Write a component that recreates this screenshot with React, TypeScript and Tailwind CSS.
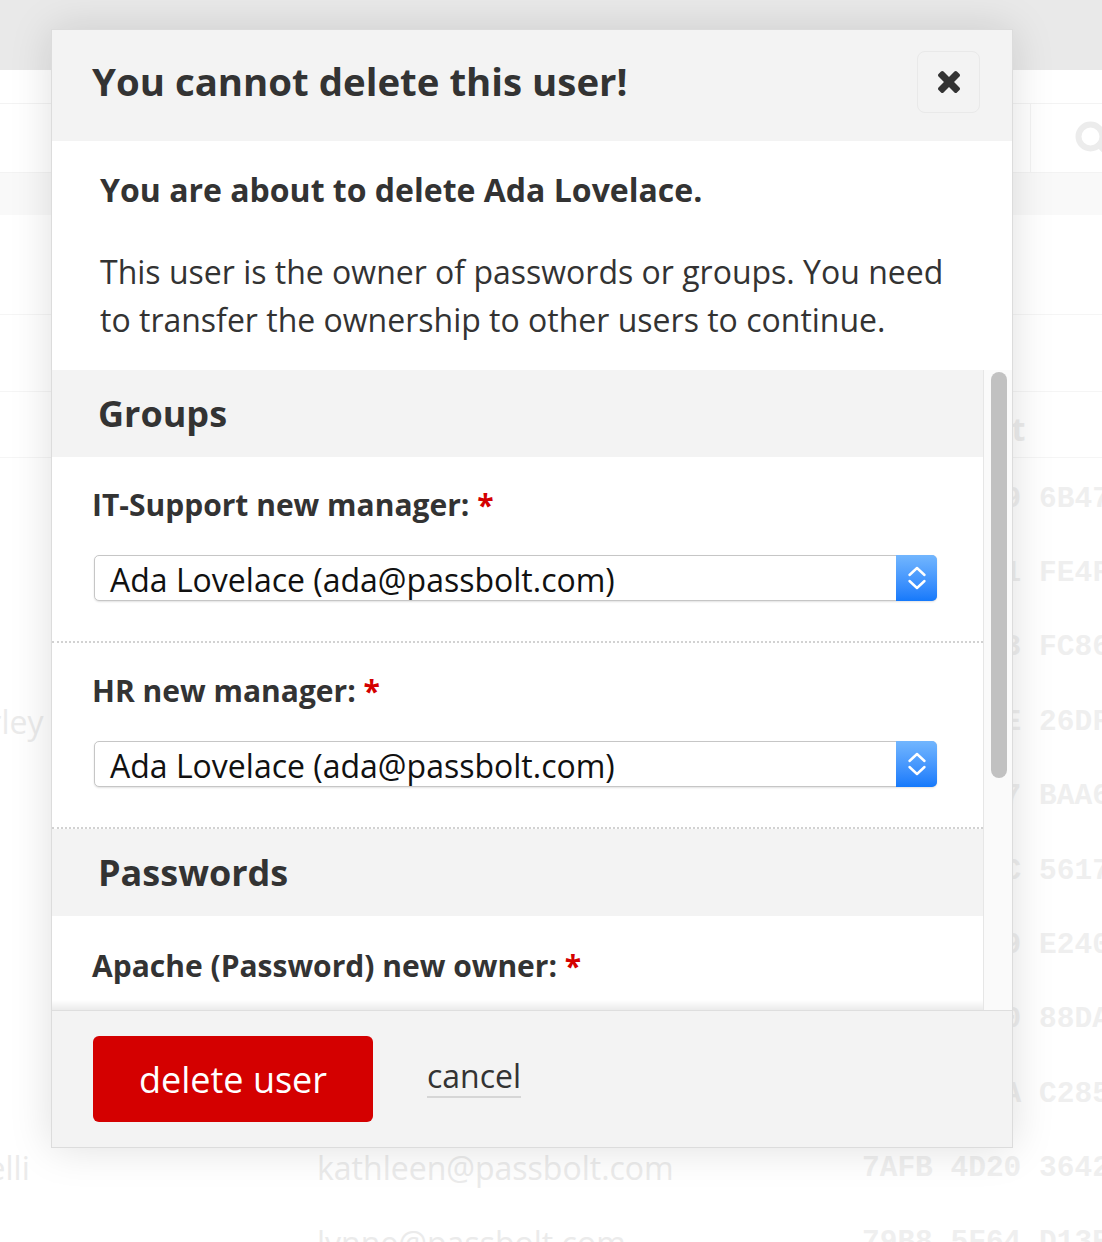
import { Search } from 'lucide-react'

// only the long names reach into the visible strip on the left
const rows = [
  { name: 'Ada Lovelace', email: 'ada@passbolt.com', fp: '03F2 60E9 6B47' },
  { name: 'Betty Holberton', email: 'betty@passbolt.com', fp: '8E5A 2D41 FE4F' },
  { name: 'Carol Shaw', email: 'carol@passbolt.com', fp: 'A74F 0D93 FC86' },
  { name: 'Dame Steve Shirley', email: 'dame@passbolt.com', fp: 'B1C2 7C0E 26DF' },
  { name: 'Edith Clarke', email: 'edith@passbolt.com', fp: '4E1D 9A57 BAA6' },
  { name: 'Frances Allen', email: 'frances@passbolt.com', fp: 'E803 5B2C 5617' },
  { name: 'Grace Hopper', email: 'grace@passbolt.com', fp: '1F6E 2D49 E240' },
  { name: 'Hedy Lamarr', email: 'hedy@passbolt.com', fp: '9C33 E4A0 88DA' },
  { name: 'Jean Bartik', email: 'jean@passbolt.com', fp: '6D8B 51FA C285' },
  { name: 'Kathleen Antonelli', email: 'kathleen@passbolt.com', fp: '7AFB 4D20 3642' },
  { name: 'Lynne Jolitz', email: 'lynne@passbolt.com', fp: '79B8 5F64 D13E' },
]

function CloseIcon() {
  return (
    <svg width="22" height="22" viewBox="110 366 1188 1188" fill="#333">
      <path d="M1298 1322q0 40-28 68l-136 136q-28 28-68 28t-68-28l-294-294-294 294q-28 28-68 28t-68-28l-136-136q-28-28-28-68t28-68l294-294-294-294q-28-28-28-68t28-68l136-136q28-28 68-28t68 28l294 294 294-294q28-28 68-28t68 28l136 136q28 28 28 68t-28 68l-294 294 294 294q28 28 28 68z" />
    </svg>
  )
}

function FakeSelect({ value }: { value: string }) {
  return (
    <div className="ml-[2px] flex h-[46px] w-[843px] items-stretch rounded-[5px] border border-[#c6c6c6] bg-white shadow-[0_1px_2px_rgba(0,0,0,0.12)]">
      <div className="flex flex-1 items-center pl-[15px] pt-[3px] text-[32px] text-[#111]">{value}</div>
      <div className="-my-px -mr-px flex w-[41px] items-center justify-center rounded-r-[5px] bg-gradient-to-b from-[#72b6fe] to-[#1479fb]">
        <svg width="20" height="24" viewBox="0 0 20 24" fill="none" stroke="white" strokeWidth="2.4" strokeLinecap="round" strokeLinejoin="round">
          <path d="M2.5 9 L10 2 L17.5 9" />
          <path d="M2.5 15 L10 22 L17.5 15" />
        </svg>
      </div>
    </div>
  )
}

function Field({ label, value, last }: { label: string; value?: string; last?: boolean }) {
  return (
    <div className={last ? 'pl-[40px] pt-[27px]' : 'border-b-2 border-dotted border-[#d2d2d2] pl-[40px] pt-[25px] pb-[40px]'}>
      <div className="text-[30px] font-bold leading-[45px] text-[#333]">
        {label} <span className="text-[#d40000]">*</span>
      </div>
      {value && (
        <div className="mt-[28px]">
          <FakeSelect value={value} />
        </div>
      )}
    </div>
  )
}

function SectionHead({ title }: { title: string }) {
  return (
    <div className="flex h-[87px] items-center bg-[#f3f3f3] pl-[46px] text-[36px] font-bold text-[#333]">
      {title}
    </div>
  )
}

export default function App() {
  return (
    <div className="relative h-[1242px] w-full overflow-hidden bg-white font-['Open_Sans',sans-serif]">
      {/* page behind the dialog */}
      <div className="h-[70px] bg-[#e9e9e9]" />
      <div className="h-[34px] border-b border-[#f3f3f3]" />
      <div className="flex h-[69px] justify-end border-b border-[#f3f3f3]">
        <div className="flex w-[72px] items-center justify-end border-l border-[#f3f3f3]">
          <Search size={36} strokeWidth={4} color="#ececec" className="-mr-[8px]" />
        </div>
      </div>
      <div className="h-[42px] bg-[#f9f9f9]" />
      <div className="h-[100px] border-b border-[#f5f5f5]" />
      <div className="h-[77px] border-b border-[#f5f5f5]" />
      <div className="flex h-[66px] items-center border-b border-[#f5f5f5] pt-[8px]">
        <div className="ml-[846px] text-[32px] font-bold text-[#ededed]">Fingerprint</div>
      </div>
      {rows.map((r) => (
        <div key={r.email} className="flex h-[74.4px] items-center whitespace-nowrap pt-[7px]">
          <div className="w-[44px] shrink-0 overflow-hidden text-[32px] text-[#ebebeb]">
            <div className="-ml-[243px]">{r.name}</div>
          </div>
          <div className="ml-[273px] w-[545px] shrink-0 text-[32px] text-[#ebebeb]">{r.email}</div>
          <div className="shrink-0 whitespace-pre font-['Liberation_Mono',monospace] text-[29.5px] font-bold text-[#efefef]">{r.fp}</div>
        </div>
      ))}

      {/* dialog */}
      <div className="absolute left-[51px] top-[29px] flex w-[962px] flex-col border border-[#dcdcdc] bg-white shadow-[0_0_40px_rgba(0,0,0,0.13)]">
        <div className="flex h-[111px] items-center justify-between bg-[#f3f3f3] pb-[7px] pl-[40px] pr-[32px]">
          <h1 className="text-[38.4px] font-bold text-[#333]">You cannot delete this user!</h1>
          <button className="flex h-[62px] w-[63px] items-center justify-center rounded-[8px] border border-[#e9e9e9]">
            <CloseIcon />
          </button>
        </div>

        <div className="px-[48px] pb-[26px] pt-[25px] text-[#333]">
          <p className="text-[32px] font-bold leading-[48px]">You are about to delete Ada Lovelace.</p>
          <p className="mt-[34px] text-[32px] leading-[48px]">
            This user is the owner of passwords or groups. You need to transfer the ownership to other users to continue.
          </p>
        </div>

        <div className="flex h-[640px] overflow-hidden">
          <div className="relative flex-1 overflow-hidden">
            <SectionHead title="Groups" />
            <Field label="IT-Support new manager:" value="Ada Lovelace (ada@passbolt.com)" />
            <Field label="HR new manager:" value="Ada Lovelace (ada@passbolt.com)" />
            <SectionHead title="Passwords" />
            <Field label="Apache (Password) new owner:" last />
            <div className="absolute bottom-0 left-0 right-0 h-[10px] bg-gradient-to-b from-transparent to-[rgba(0,0,0,0.08)]" />
          </div>
          <div className="w-[29px] border-l border-[#e6e6e6] bg-[#fafafa]">
            <div className="ml-[7px] mt-[2px] h-[406px] w-[16px] rounded-full bg-[#c1c1c1]" />
          </div>
        </div>

        <div className="flex h-[137px] items-center border-t border-[#dedede] bg-[#f3f3f3] pl-[41px]">
          <button className="h-[86px] w-[280px] rounded-[6px] bg-[#d40000] pt-[1px] text-[36px] leading-[86px] text-white">
            delete user
          </button>
          <span className="mb-[4px] ml-[54px] border-b-2 border-[#d6d6d6] text-[32px] leading-[40px] text-[#333]">cancel</span>
        </div>
      </div>
    </div>
  )
}
